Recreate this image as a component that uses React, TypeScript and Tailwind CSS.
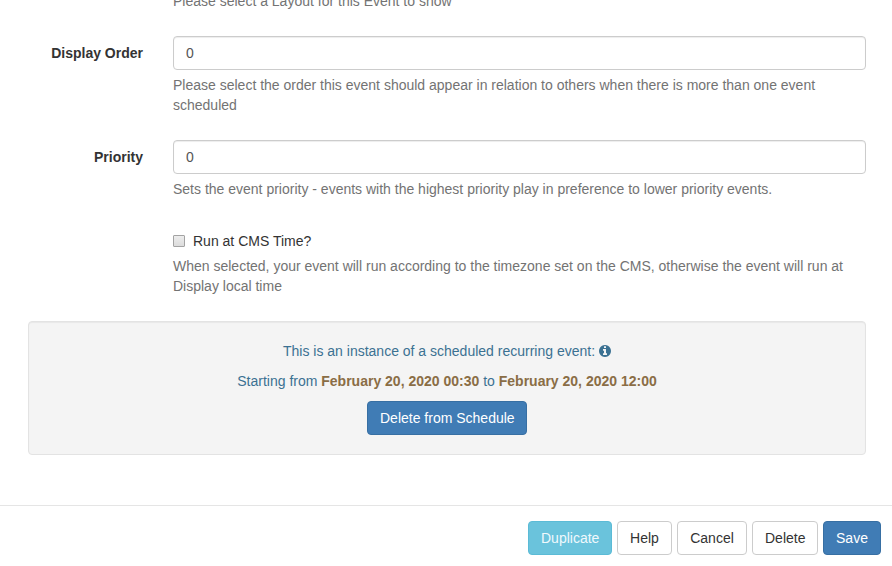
import React from "react";

const inputClass =
  "block h-[34px] w-full rounded border border-[#ccc] bg-white px-3 py-1.5 text-sm leading-5 text-[#555] shadow-[inset_0_1px_1px_rgba(0,0,0,0.075)] outline-none";

function Field({ label, value, help }: { label: string; value: string; help: string }) {
  return (
    <div className="mb-[15px] flex">
      <label className="w-[143px] shrink-0 pt-[7px] text-right font-bold text-[#333]">{label}</label>
      <div className="ml-[30px] w-[693px]">
        <input className={inputClass} defaultValue={value} />
        <p className="mt-[5px] mb-2.5 text-[#737373]">{help}</p>
      </div>
    </div>
  );
}

const buttonClass = "h-[34px] rounded border px-3 text-sm leading-5 whitespace-nowrap";

export default function App() {
  return (
    <div className="h-[566px] w-[892px] overflow-hidden bg-white font-['Liberation_Sans',Arial,sans-serif] text-sm leading-5 text-[#333]">
      <p className="-mt-[9px] mb-[25px] ml-[173px] text-[#737373]">Please select a Layout for this Event to show</p>
      <Field
        label="Display Order"
        value="0"
        help="Please select the order this event should appear in relation to others when there is more than one event scheduled"
      />
      <Field
        label="Priority"
        value="0"
        help="Sets the event priority - events with the highest priority play in preference to lower priority events."
      />
      <div className="ml-[173px] w-[693px] pt-[7px]">
        <label className="flex items-center gap-2">
          <input
            type="checkbox"
            className="h-3 w-3 appearance-none rounded-[1px] border border-[#a3a3a3] bg-linear-to-b from-[#ededed] to-[#dcdcdc]"
          />
          Run at CMS Time?
        </label>
        <p className="mt-[5px] text-[#737373]">
          When selected, your event will run according to the timezone set on the CMS, otherwise the event will run at Display local time
        </p>
      </div>
      <section className="mt-[25px] ml-7 flex h-[134px] w-[838px] flex-col items-center rounded border border-[#e3e3e3] bg-[#f4f4f4] pt-[19px] text-[#3b7192] shadow-[inset_0_1px_1px_rgba(0,0,0,0.05)]">
        <p className="mb-2.5 flex items-center gap-1">
          This is an instance of a scheduled recurring event:
          <svg viewBox="0 0 1536 1536" className="h-3 w-3" fill="currentColor">
            <path d="M1024 1248v-160q0-14-9-23t-23-9h-96V544q0-14-9-23t-23-9H544q-14 0-23 9t-9 23v160q0 14 9 23t23 9h96v320h-96q-14 0-23 9t-9 23v160q0 14 9 23t23 9h448q14 0 23-9t9-23zM896 352V192q0-14-9-23t-23-9H672q-14 0-23 9t-9 23v160q0 14 9 23t23 9h192q14 0 23-9t9-23zM1536 768q0 209-103 385.500T1153.500 1433 768 1536t-385.500-103T103 1153.500 0 768t103-385.500T382.500 103 768 0t385.500 103T1433 382.500 1536 768z" />
          </svg>
        </p>
        <p className="mb-2.5">
          Starting from <strong className="text-[#8a6d45]">February 20, 2020 00:30</strong> to{" "}
          <strong className="text-[#8a6d45]">February 20, 2020 12:00</strong>
        </p>
        <button className={`${buttonClass} w-40 border-[#376fa3] bg-[#407cb5] text-white`}>Delete from Schedule</button>
      </section>
      <footer className="mt-[50px] flex justify-end gap-[5px] border-t border-[#e5e5e5] pt-[15px] pr-[11px]">
        <button className={`${buttonClass} w-[84px] border-[#5bbbd6] bg-[#6ac3dc] text-[#f0f9fc]`}>Duplicate</button>
        <button className={`${buttonClass} w-[55px] border-[#ccc] bg-white`}>Help</button>
        <button className={`${buttonClass} w-[70px] border-[#ccc] bg-white`}>Cancel</button>
        <button className={`${buttonClass} w-[66px] border-[#ccc] bg-white`}>Delete</button>
        <button className={`${buttonClass} w-[58px] border-[#376fa3] bg-[#407cb5] text-white`}>Save</button>
      </footer>
    </div>
  );
}
